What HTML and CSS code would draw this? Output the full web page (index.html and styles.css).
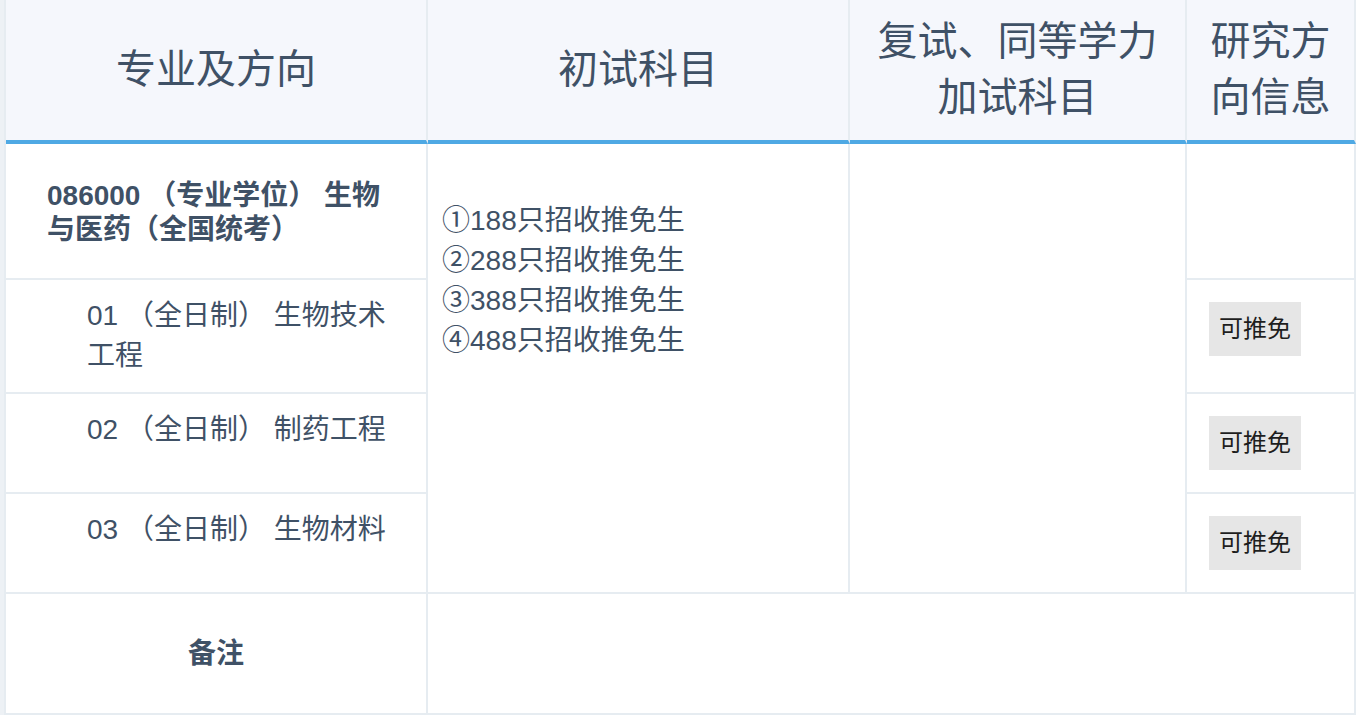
FILE: index.html
```html
<!DOCTYPE html>
<html lang="zh-CN">
<head>
<meta charset="utf-8">
<title>专业目录</title>
<link rel="stylesheet" href="styles.css">
</head>
<body>
<div class="wrap">
  <table class="catalog">
    <colgroup>
      <col class="c-major">
      <col class="c-exam">
      <col class="c-retest">
      <col class="c-info">
    </colgroup>
    <thead>
      <tr>
        <th>专业及方向</th>
        <th>初试科目</th>
        <th>复试、同等学力加试科目</th>
        <th>研究方向信息</th>
      </tr>
    </thead>
    <tbody>
      <tr class="row-major">
        <td class="major">086000 （专业学位） 生物与医药（全国统考）</td>
        <td class="exam" rowspan="4">
          <div>①188只招收推免生</div>
          <div>②288只招收推免生</div>
          <div>③388只招收推免生</div>
          <div>④488只招收推免生</div>
        </td>
        <td class="retest" rowspan="4"></td>
        <td class="info"></td>
      </tr>
      <tr>
        <td class="dir">01 （全日制） 生物技术工程</td>
        <td class="info"><span class="tag">可推免</span></td>
      </tr>
      <tr>
        <td class="dir">02 （全日制） 制药工程</td>
        <td class="info"><span class="tag">可推免</span></td>
      </tr>
      <tr>
        <td class="dir">03 （全日制） 生物材料</td>
        <td class="info"><span class="tag">可推免</span></td>
      </tr>
      <tr class="row-note">
        <td class="note-label">备注</td>
        <td class="note" colspan="3"></td>
      </tr>
    </tbody>
  </table>
</div>
</body>
</html>
```

FILE: styles.css
```css
* { box-sizing: border-box; }

html, body {
  margin: 0;
  padding: 0;
  background: #ffffff;
}

body {
  font-family: "Liberation Sans", "Noto Sans CJK SC", sans-serif;
  color: #3f5166;
}

.wrap {
  width: 1356px;
  border-left: 4px solid #edf1f5;
}

.catalog {
  width: 1352px;
  table-layout: fixed;
  border-collapse: separate;
  border-spacing: 0;
  border-left: 2px solid #e6ecf1;
}

.c-major { width: 422px; }
.c-exam { width: 422px; }
.c-retest { width: 337px; }
.c-info { width: 169px; }

.catalog th,
.catalog td {
  border-right: 2px solid #e6ecf1;
  border-bottom: 2px solid #e6ecf1;
  padding: 0;
  vertical-align: top;
  text-align: left;
}

.catalog th {
  height: 144px;
  background: #f5f7fc;
  border-bottom: 4px solid #4fa9e4;
  font-size: 40px;
  font-weight: normal;
  line-height: 56px;
  text-align: center;
  vertical-align: middle;
  padding: 0 15px 3px;
}

.catalog td {
  font-size: 28px;
  line-height: 40px;
}

.row-major td { height: 136px; }

.major {
  font-weight: bold;
  line-height: 34px !important;
  padding: 35px 28px 31px 41px !important;
  vertical-align: middle !important;
}

.dir {
  padding: 16px 28px 16px 81px !important;
}

.exam {
  padding: 57px 14px 0 14px !important;
}

.info {
  padding: 22px 10px 22px 22px !important;
}

.tag {
  display: inline-block;
  height: 54px;
  line-height: 54px;
  padding: 0 10px;
  background: #e6e6e6;
  color: #1e1e1e;
  font-size: 24px;
  vertical-align: top;
}

.row-note td { height: 121px; }

.note-label {
  font-weight: bold;
  text-align: center !important;
  vertical-align: middle !important;
}
```
